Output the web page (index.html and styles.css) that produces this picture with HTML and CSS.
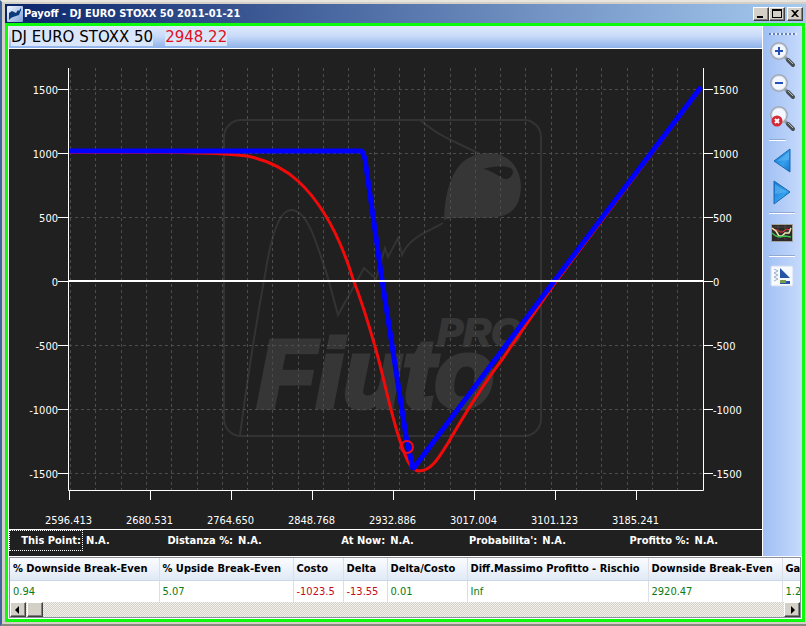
FILE: index.html
```html
<!DOCTYPE html>
<html lang="it">

<head>
    <meta charset="UTF-8">
    <title>Payoff - DJ EURO STOXX 50 2011-01-21</title>
    <link rel="stylesheet" href="styles.css">
</head>

<body>
    <div class="window">
        <header class="titlebar">
            <svg class="app-icon" viewBox="0 0 16 16">
                <defs>
                    <linearGradient id="app" x1="0" y1="0" x2="1" y2="1">
                        <stop offset="0" stop-color="#f4f8ff" />
                        <stop offset="1" stop-color="#7f9fd8" />
                    </linearGradient>
                </defs>
                <rect width="16" height="16" rx="1" fill="url(#app)" />
                <path d="M2 14V7l3-2 2 1 2 1 2-3 1 1 2-3v2l-2 5-3 1-3 1-2 1z" fill="#0d3a78" />
            </svg>
            <span class="title">Payoff - DJ EURO STOXX 50 2011-01-21</span>
            <div class="win-buttons">
                <button type="button" aria-label="Minimize"><svg viewBox="0 0 12 10"><path d="M2 7h6v2H2z" /></svg></button>
                <button type="button" aria-label="Maximize"><svg viewBox="0 0 12 10"><path d="M1 0h10v9H1zM2 2v6h8V2z" fill-rule="evenodd" /></svg></button>
                <button type="button" class="close" aria-label="Close"><svg viewBox="0 0 12 10"><path d="M2 1h2l2 2 2-2h2L7 4.500l3 3.500H8L6 6 4 8H2l3-3.500z" /></svg></button>
            </div>
        </header>

        <main class="content">
            <div class="upper">
                <section class="payoff">
                    <div class="quote"><span>DJ EURO STOXX 50</span><span class="price">2948.22</span></div>

                    <svg class="chart" viewBox="9 49 753 480">
                        <!-- logo -->
                        <g class="logo-line">
                            <rect x="224" y="120" width="317" height="316" rx="17" />
                            <path d="M240 435Q252 345 265 275C271 236 279 210 291 210C309 210 318 249 328 278L338 315L364 268L376 279L385 248L388 257L398 238L402 255C410 236 430 231 443 223" />
                            <path d="M420 120Q435 133 455 142L480 154" />
                        </g>
                        <path class="logo" fill-rule="evenodd" d="M444 219C446 177 459 153 489 153C510 153 521 170 521 187C520 212 506 218 485 218H451L444 220zM483 169C490 170 496 174 502 178C507 181 513 177 513 171C511 165 497 165 483 169z" />
                        <text class="logo logo-name" x="257" y="407">Fiuto</text>
                        <text class="logo logo-pro" x="437" y="346">PRO</text>

                        <!-- grid -->
                        <g id="grid" class="grid"></g>
                        <g id="axes" class="axes">
                            <path d="M68.500 68V490.500H703.500V68" />
                        </g>
                        <g id="labels" class="labels"></g>

                        <!-- curves -->
                        <path class="now" d="M69 152.500H180C205 153 228 153 247 156C267 160 284 168 298 181C324 205 341 240 353 279C362 302 369 325 376 350C384 378 389 407 400 441C406 459 411 471 419 471C431 471 438 459 448 443C463 417 480 389 501 361L555 283L701 88" />
                        <path class="expiry" d="M69 151H362L365 159L382 280L406 436L413 469L555 280L701 87" />
                        <path class="zero" d="M69 281H703" />
                        <circle class="spot" cx="407" cy="447" r="6" />
                    </svg>

                    <dl class="info">
                        <div><dt class="focus">This Point:</dt><dd>N.A.</dd></div>
                        <div><dt>Distanza %:</dt><dd>N.A.</dd></div>
                        <div><dt>At Now:</dt><dd>N.A.</dd></div>
                        <div><dt>Probabilita':</dt><dd>N.A.</dd></div>
                        <div><dt>Profitto %:</dt><dd>N.A.</dd></div>
                    </dl>
                </section>

                <nav class="toolbar">
                    <svg width="0" height="0" class="defs">
                        <defs>
                            <linearGradient id="arrow" x1="0" y1="0" x2="1" y2="1">
                                <stop offset="0" stop-color="#1377cf" />
                                <stop offset=".6" stop-color="#35a0ec" />
                                <stop offset="1" stop-color="#1674cb" />
                            </linearGradient>
                            <g id="lens">
                                <path d="M15 15l3 3" stroke="#8d929c" stroke-width="3" />
                                <path d="M18 18l5 5" stroke="#485056" stroke-width="4" stroke-linecap="round" />
                                <path d="M18 17l5 5" stroke="#b4bcba" stroke-width="1" />
                                <circle cx="9" cy="9" r="8" fill="#f3f7ff" stroke="#a4a8b2" stroke-width="2" />
                                <circle cx="9" cy="9" r="7" fill="none" stroke="#dde5f5" stroke-width="1" />
                            </g>
                        </defs>
                    </svg>
                    <div class="grip"></div>
                    <button type="button" aria-label="Zoom in"><svg viewBox="0 0 26 26"><use href="#lens" /><path d="M5 9h8M9 5v8" stroke="#2450b8" stroke-width="2" /></svg></button>
                    <button type="button" aria-label="Zoom out"><svg viewBox="0 0 26 26"><use href="#lens" /><path d="M5 9h8" stroke="#2450b8" stroke-width="2" /></svg></button>
                    <button type="button" aria-label="Reset zoom"><svg viewBox="0 0 26 26"><use href="#lens" /><circle cx="7" cy="15" r="5.500" fill="#d42a38" /><path d="M5 13l4 4M9 13l-4 4" stroke="#fff" stroke-width="2" /></svg></button>
                    <hr class="short">
                    <button type="button" aria-label="Previous"><svg viewBox="0 0 26 26"><path d="M20 1v23L4 13z" fill="url(#arrow)" stroke="#1769b5" /><path d="M19 4v8L7 13z" fill="#69bdf5" opacity=".5" /></svg></button>
                    <button type="button" aria-label="Next"><svg viewBox="0 0 26 26"><path d="M4 1v23l16-12z" fill="url(#arrow)" stroke="#1769b5" /><path d="M5 4v10l12-2z" fill="#69bdf5" opacity=".5" /></svg></button>
                    <hr>
                    <button type="button" class="tall" aria-label="Payoff chart"><svg viewBox="0 0 26 26"><rect x="1.500" y="4.500" width="21" height="17" fill="#2c2928" stroke="#a3a39c" /><path d="M3 7h18M3 11h18M8 5v15M15 5v15" stroke="#4c4644" /><path d="M2 9l5 1 3 2h3l3-3 5 1" fill="none" stroke="#e33" /><path d="M2 8l4 3 3 5h3l3-3h4l2-5" fill="none" stroke="#ece9b0" stroke-width="1.500" /><path d="M2 13l4 3 4 1 5-1 6 1" fill="none" stroke="#40c050" stroke-width="1.500" /></svg></button>
                    <hr>
                    <button type="button" class="tall" aria-label="Report"><svg viewBox="0 0 26 26"><rect x="1" y="3" width="22" height="20" rx="1" fill="#f7faff" stroke="#d0daec" /><path d="M10 5l10 10H10z" fill="#2454a8" /><path d="M10 18h10v3H10z" fill="#2454a8" /><path d="M10 17h6v3h-6z" fill="#7a9c48" /><path d="M4 6l4 2-4 2 4 2-4 2 4 2-4 2" fill="none" stroke="#9dafca" /></svg></button>
                </nav>
            </div>

            <div class="results">
                <div class="table-view">
                    <table>
                        <colgroup>
                            <col class="c-wide"><col class="c-break"><col class="c-cost"><col class="c-delta"><col class="c-ratio"><col class="c-diff"><col class="c-break"><col class="c-gain">
                        </colgroup>
                        <thead>
                            <tr>
                                <th>% Downside Break-Even</th>
                                <th>% Upside Break-Even</th>
                                <th>Costo</th>
                                <th>Delta</th>
                                <th>Delta/Costo</th>
                                <th>Diff.Massimo Profitto - Rischio</th>
                                <th>Downside Break-Even</th>
                                <th>Ga</th>
                            </tr>
                        </thead>
                        <tbody>
                            <tr>
                                <td>0.94</td>
                                <td>5.07</td>
                                <td class="neg">-1023.5</td>
                                <td class="neg">-13.55</td>
                                <td>0.01</td>
                                <td>Inf</td>
                                <td>2920.47</td>
                                <td>1.2</td>
                            </tr>
                        </tbody>
                    </table>
                </div>
                <div class="scrollbar">
                    <button type="button" aria-label="Scroll left"><svg viewBox="0 0 12 12"><path d="M7 2v8L3 6z" /></svg></button>
                    <div class="thumb"></div>
                    <button type="button" class="right" aria-label="Scroll right"><svg viewBox="0 0 12 12"><path d="M5 2v8l4-4z" /></svg></button>
                </div>
            </div>
        </main>
    </div>
    <script src="chart.js"></script>
</body>

</html>
```
FILE: styles.css
```css
* {
    box-sizing: border-box;
}

body {
    margin: 0;
    background: #d4d0c8;
    color: #000;
    font-family: "DejaVu Sans Condensed", "DejaVu Sans", sans-serif;
    font-size: 11px;
}

button {
    display: flex;
    align-items: center;
    justify-content: center;
    padding: 0;
}

.window {
    padding: 2px 0 2px 2px;
    background: #d4d0c8;
    border-top: 2px solid #e8e5df;
    border-left: 2px solid #3f659e;
    border-bottom: 2px solid #8a877f;
}

/* title bar */
.titlebar {
    display: flex;
    align-items: center;
    height: 19px;
    margin-left: 1px;
    padding: 0 3px 0 2px;
    background: linear-gradient(to right, #0a246a, #a6caf0);
}

.app-icon {
    width: 16px;
    height: 16px;
}

.title {
    flex: 1;
    margin-left: 1px;
    color: #fff;
    font-weight: bold;
    white-space: nowrap;
}

.win-buttons {
    display: flex;
}

.win-buttons button,
.scrollbar button,
.thumb {
    width: 16px;
    height: 14px;
    background: #d4d0c8;
    border: 1px solid;
    border-color: #fff #404040 #404040 #fff;
    box-shadow: inset -1px -1px #808080;
}

.win-buttons svg {
    width: 12px;
    height: 10px;
}

.win-buttons .close {
    margin-left: 2px;
}

/* content */
.content {
    border: 3px solid #0cfa0c;
    margin-right: 1px;
    margin-left: 1px;
}

.upper {
    display: flex;
}

.payoff {
    flex: 1;
    min-width: 0;
    border-left: 1px solid #fff;
    border-right: 1px solid #fff;
    background: #202020;
}

.quote {
    display: flex;
    align-items: center;
    gap: 12px;
    height: 23px;
    padding-left: 2px;
    border-bottom: 1px solid #fff;
    background: linear-gradient(#dfeafd, #c9dbf9 45%, #8fb2ea);
    font-family: "DejaVu Sans", sans-serif;
    font-size: 15px;
    line-height: 17px;
    white-space: nowrap;
}

.quote span {
    background: #dae6fa;
}

.quote .price {
    color: #e0101c;
}

.chart {
    display: block;
    width: 100%;
}

.logo-line {
    fill: none;
    stroke: #333;
    stroke-width: 2;
}

.logo {
    fill: #363636;
}

.logo-name,
.logo-pro {
    font-family: "Liberation Sans", sans-serif;
    font-style: italic;
    font-weight: bold;
    stroke: #363636;
}

.logo-name {
    font-size: 97px;
    stroke-width: 5;
}

.logo-pro {
    font-size: 39px;
    stroke-width: 2;
}

.grid {
    stroke: #4c4c4c;
    stroke-dasharray: 3 3;
}

.axes {
    fill: none;
    stroke: #fff;
}

.labels {
    fill: #fff;
    font-size: 11px;
}

.labels .left {
    text-anchor: end;
}

.labels .bottom {
    text-anchor: middle;
}

.now {
    fill: none;
    stroke: #f00a0a;
    stroke-width: 3;
}

.expiry {
    fill: none;
    stroke: #00f;
    stroke-width: 5;
    stroke-linejoin: bevel;
}

.zero {
    stroke: #fff;
    stroke-width: 2;
}

.spot {
    fill: none;
    stroke: #f00a1e;
    stroke-width: 2;
}

.info {
    display: grid;
    grid-template-columns: repeat(5, 20.2%);
    height: 27px;
    margin: 0;
    border-top: 1px solid #fff;
    overflow: hidden;
    color: #fff;
    font-weight: bold;
    line-height: 20px;
    white-space: nowrap;
}

.info div {
    display: flex;
}

.info dt {
    width: 74px;
    height: 21px;
    padding-right: 1px;
    border: 1px solid transparent;
    text-align: right;
}

.info .focus {
    border: 1px dotted #fff;
}

.info dd {
    margin: 1px 0 0 3px;
}

/* toolbar */
.toolbar {
    width: 39px;
    padding: 7px 4px 0 6px;
    background: linear-gradient(to right, #9fbff3, #c6dafc);
}

.defs {
    position: absolute;
}

.grip {
    width: 28px;
    height: 2px;
    margin-bottom: 4px;
    background: repeating-linear-gradient(to right, #5f7fb8 0 2px, #e8f0ff 2px 4px);
}

.toolbar button {
    width: 28px;
    height: 32px;
    background: none;
    border: 0;
}

.toolbar button.tall {
    height: 38px;
}

.toolbar svg {
    width: 26px;
    height: 26px;
}

.toolbar hr {
    width: 26px;
    height: 2px;
    margin: 3px 0 0;
    border: 0;
    background: #fff;
    border-top: 1px solid #91a9cf;
}

.toolbar .short {
    width: 17px;
    margin: 4px 0;
}

/* results */
.results {
    border-top: 1px solid #fff;
    border-left: 1px solid #fff;
    background: #fff;
    padding: 0 1px 1px 0;
}

.table-view {
    overflow: hidden;
    border: 1px solid #8a8f99;
    border-bottom: 0;
}

table {
    width: 832px;
    table-layout: fixed;
    border-collapse: collapse;
}

.c-wide {
    width: 149px;
}

.c-break {
    width: 134px;
}

.c-cost {
    width: 50px;
}

.c-delta {
    width: 44px;
}

.c-ratio {
    width: 80px;
}

.c-diff {
    width: 181px;
}

.c-gain {
    width: 60px;
}

th,
td {
    height: 22px;
    padding: 0 2px 0 3px;
    border-right: 1px solid #dcdfe6;
    text-align: left;
    white-space: nowrap;
}

th {
    background: linear-gradient(#fafcff, #eef3fb 50%, #dfe8f6);
    border-bottom: 1px solid #ccd8ea;
}

td {
    color: #0c7a14;
}

td.neg {
    color: #c40c20;
}

.scrollbar {
    display: flex;
    gap: 1px;
    height: 16px;
    border: solid #8a8f99;
    border-width: 0 1px 1px;
    background: repeating-conic-gradient(#d4d0c8 0 25%, #f4f2ee 0 50%) 0 0 / 2px 2px;
}

.scrollbar button,
.thumb {
    height: 15px;
}

.scrollbar svg {
    width: 12px;
    height: 12px;
}

.scrollbar .right {
    margin-left: auto;
}
```
FILE: chart.js
```javascript
const NS = 'http://www.w3.org/2000/svg';
const grid = document.getElementById('grid');
const axes = document.getElementById('axes');
const labels = document.getElementById('labels');

function line(parent, x1, y1, x2, y2) {
    const el = document.createElementNS(NS, 'path');
    el.setAttribute('d', `M${x1} ${y1}L${x2} ${y2}`);
    parent.appendChild(el);
}

function label(cls, x, y, text) {
    const el = document.createElementNS(NS, 'text');
    el.setAttribute('class', cls);
    el.setAttribute('x', x);
    el.setAttribute('y', y);
    el.textContent = text;
    labels.appendChild(el);
}

// vertical grid
for (let i = 0; i < 25; i++) {
    const x = 70.5 + Math.round(i * 25.3);
    line(grid, x, 68, x, 490);
}

// y axis, both sides
[1500, 1000, 500, 0, -500, -1000, -1500].forEach((value, i) => {
    const y = 89.5 + i * 64;
    line(grid, 69, y, 703, y);
    line(axes, 58, y, 68, y);
    line(axes, 703, y, 713, y);
    label('left', 58, y + 4.5, value);
    label('right', 713, y + 4.5, value);
});

// x axis
['2596.413', '2680.531', '2764.650', '2848.768', '2932.886', '3017.004', '3101.123', '3185.241'].forEach((value, i) => {
    const x = 69.5 + i * 81;
    line(axes, x, 491, x, 500);
    label('bottom', x - 1, 524, value);
});
```
